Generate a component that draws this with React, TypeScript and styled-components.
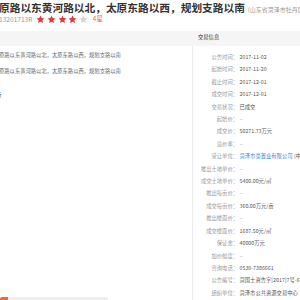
import React from "react";
import styled, { createGlobalStyle } from "styled-components";

const Global = createGlobalStyle`
  html, body { margin: 0; padding: 0; background: #fff; }
  body {
    font-family: "Noto Sans CJK SC", "Noto Sans", sans-serif;
    overflow: hidden;
  }
`;

const Page = styled.div`
  width: 300px;
  height: 300px;
  overflow: hidden;
  background: #fff;
  display: flex;
  flex-direction: column;
`;

const TitleRow = styled.div`
  display: flex;
  align-items: baseline;
  white-space: nowrap;
  margin-top: 1px;
  margin-left: -1px;
  height: 14px;
  line-height: 14px;
`;

const Title = styled.span`
  font-size: 10.7px;
  font-weight: 700;
  color: #333;
`;

const Region = styled.span`
  font-size: 6px;
  color: #999;
  margin-left: 3px;
`;

const SubRow = styled.div`
  display: flex;
  align-items: center;
  height: 8px;
  margin-top: 0px;
  margin-left: -1px;
  white-space: nowrap;
`;

const Code = styled.span`
  font-size: 6.6px;
  color: #999;
  line-height: 8px;
`;

const Stars = styled.div`
  display: flex;
  gap: 1.6px;
  margin-left: 4px;
`;

const StarIcon = styled.svg<{ $on: boolean }>`
  width: 9px;
  height: 9px;
  fill: ${(p) => (p.$on ? "#e4393c" : "#d6d6d6")};
`;

const Level = styled.span`
  font-size: 6.4px;
  color: #f06a4c;
  margin-left: 5px;
  line-height: 8px;
`;

const Band = styled.div`
  display: flex;
  height: 15px;
  margin-top: 8px;
  background: #f5f5f5;
`;

const BandLeft = styled.div`
  width: 193px;
  flex: none;
`;

const BandRight = styled.div`
  flex: 1;
  font-size: 5.3px;
  color: #333;
  line-height: 15px;
  padding-left: 5px;
  margin-top: -1px;
  white-space: nowrap;
`;

const Body = styled.div`
  display: flex;
  flex: 1;
  min-height: 0;
`;

const LeftCol = styled.div`
  width: 193px;
  flex: none;
  display: flex;
  flex-direction: column;
  padding-top: 5px;
  border-right: 1px solid #ececec;
  box-sizing: border-box;
`;

const LeftLine = styled.div<{ $mt: number }>`
  margin-top: ${(p) => p.$mt}px;
  height: 8px;
  line-height: 8px;
  font-size: 5.3px;
  color: #666;
  white-space: nowrap;
  margin-left: -1px;
`;

const Cut = styled.span<{ $shift: number }>`
  display: inline-block;
  margin-left: ${(p) => p.$shift}px;
`;

const ProgressTrack = styled.div`
  margin-top: 111px;
  display: flex;
  height: 6px;
  width: 108px;
  flex: none;
`;

const ProgressFill = styled.div`
  width: 8px;
  background: #f26a2b;
  border-top-left-radius: 2px;
`;

const ProgressRest = styled.div`
  flex: 1;
  background: #eeeeee;
  border-top-right-radius: 2px;
`;

const RightCol = styled.div`
  flex: 1;
  display: flex;
  flex-direction: column;
  padding-top: 4.8px;
`;

const InfoRow = styled.div`
  display: flex;
  height: 12.42px;
  align-items: center;
  white-space: nowrap;
  font-size: 5.3px;
`;

const Label = styled.span`
  width: 45px;
  flex: none;
  text-align: right;
  color: #999;
`;

const Value = styled.span<{ $tone: "normal" | "muted" | "link" }>`
  padding-left: 1.5px;
  color: ${(p) =>
    p.$tone === "link" ? "#3c7fd6" : p.$tone === "muted" ? "#999" : "#555"};
`;

const Extra = styled.span`
  color: #555;
  margin-left: 1.5px;
`;

type Row = { label: string; value: string; tone?: "normal" | "muted" | "link"; extra?: string };

const rows: Row[] = [
  { label: "公告时间：", value: "2017-11-02" },
  { label: "起始时间：", value: "2017-11-20" },
  { label: "截止时间：", value: "2017-12-01" },
  { label: "成交时间：", value: "2017-12-01" },
  { label: "交易状况：", value: "已成交" },
  { label: "起始价：", value: "--", tone: "muted" },
  { label: "成交价：", value: "50271.73万元" },
  { label: "溢价率：", value: "--", tone: "muted" },
  { label: "受让单位：", value: "菏泽市豪置业有限公司", tone: "link", extra: "(中标)" },
  { label: "推出土地单价：", value: "--", tone: "muted" },
  { label: "成交土地单价：", value: "5400.00元/㎡" },
  { label: "推出每亩价：", value: "--", tone: "muted" },
  { label: "成交每亩价：", value: "360.00万元/亩" },
  { label: "推出楼面价：", value: "--", tone: "muted" },
  { label: "成交楼面价：", value: "1687.50元/㎡" },
  { label: "保证金：", value: "40000万元" },
  { label: "加价幅度：", value: "--", tone: "muted" },
  { label: "咨询电话：", value: "0530-7386661" },
  { label: "公告编号：", value: "菏国土资告字[2017]7号-6" },
  { label: "组织单位：", value: "菏泽市公共资源交易中心" },
];

const Star = ({ on }: { on: boolean }) => (
  <StarIcon $on={on} viewBox="0 0 24 24">
    <polygon points="12,1.5 15.1,8.3 22.5,9.1 17,14.1 18.5,21.5 12,17.8 5.5,21.5 7,14.1 1.5,9.1 8.9,8.3" />
  </StarIcon>
);

export default function App() {
  return (
    <>
      <Global />
      <Page>
        <TitleRow>
          <Title>原路以东黄河路以北，太原东路以西，规划支路以南</Title>
          <Region>(山东省菏泽市牡丹区)</Region>
        </TitleRow>
        <SubRow>
          <Code>13201713R</Code>
          <Stars>
            {[0, 1, 2, 3, 4].map((i) => (
              <Star key={i} on={i < 4} />
            ))}
          </Stars>
          <Level>4星</Level>
        </SubRow>
        <Band>
          <BandLeft />
          <BandRight>交易信息</BandRight>
        </Band>
        <Body>
          <LeftCol>
            <LeftLine $mt={0}>原路以东黄河路以北，太原东路以西，规划支路以南</LeftLine>
            <LeftLine $mt={8}>原路以东黄河路以北，太原东路以西，规划支路以南</LeftLine>
            <LeftLine $mt={16}>
              <Cut $shift={-3}>场</Cut>
            </LeftLine>
            <LeftLine $mt={79}>
              <Cut $shift={-2}>：</Cut>
            </LeftLine>
            <ProgressTrack>
              <ProgressFill />
              <ProgressRest />
            </ProgressTrack>
          </LeftCol>
          <RightCol>
            {rows.map((r) => (
              <InfoRow key={r.label}>
                <Label>{r.label}</Label>
                <Value $tone={r.tone ?? "normal"}>{r.value}</Value>
                {r.extra && <Extra>{r.extra}</Extra>}
              </InfoRow>
            ))}
          </RightCol>
        </Body>
      </Page>
    </>
  );
}
